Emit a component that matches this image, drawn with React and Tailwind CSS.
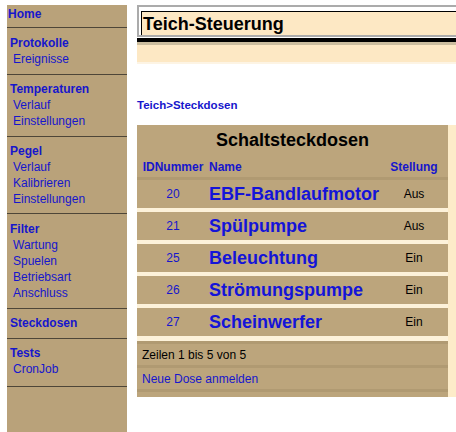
import React from "react";

const menu = [
  { title: "Protokolle", items: ["Ereignisse"], pad: "pt-[7px] pb-[7px]" },
  { title: "Temperaturen", items: ["Verlauf", "Einstellungen"], pad: "pt-[6px] pb-[7px]" },
  { title: "Pegel", items: ["Verlauf", "Kalibrieren", "Einstellungen"], pad: "pt-[6px] pb-[6px]" },
  { title: "Filter", items: ["Wartung", "Spuelen", "Betriebsart", "Anschluss"], pad: "pt-[7px] pb-[7px]" },
  { title: "Steckdosen", items: [], pad: "pt-[6px] pb-[7px]" },
  { title: "Tests", items: ["CronJob"], pad: "pt-[6px] pb-[9px]" },
];

const dosen = [
  { id: 20, name: "EBF-Bandlaufmotor", state: "Aus" },
  { id: 21, name: "Spülpumpe", state: "Aus" },
  { id: 25, name: "Beleuchtung", state: "Ein" },
  { id: 26, name: "Strömungspumpe", state: "Ein" },
  { id: 27, name: "Scheinwerfer", state: "Ein" },
];

const Sidebar = () => (
  <div className="w-[120px] shrink-0 bg-[#b9a27a] text-[12px] leading-[16px] text-[#1616cc]">
    <div className="pl-[1px] pt-[1px] pb-[5px] font-bold border-b border-[#4e4638]">Home</div>
    {menu.map((sec) => (
      <div key={sec.title} className={`${sec.pad} border-b border-[#4e4638]`}>
        <div className="pl-[3px] font-bold">{sec.title}</div>
        {sec.items.map((it, i) => (
          <div key={i} className="pl-[6px]">
            {it}
          </div>
        ))}
      </div>
    ))}
  </div>
);

const Header = () => (
  <div>
    <div className="border-t-2 border-l-2 border-[#ababab] pt-[4px] pl-[2px]">
      <div className="h-[24px] border-t border-l border-black bg-[#fde8c4] pl-[1px] pt-[1px] flex items-center text-[18px] font-bold text-black">
        Teich-Steuerung
      </div>
    </div>
    <div className="h-[2px] bg-[#ababab]" />
    <div className="h-[1px] bg-white" />
    <div className="h-[4px] bg-black" />
    <div className="h-[3px] bg-[#cbbd9f]" />
    <div className="h-[17px] bg-[#fde8c4]" />
    <div className="h-[2px] bg-[#fdf4e4]" />
  </div>
);

const Table = () => (
  <div className="flex bg-[#fdf2da]">
    <div className="w-[311px] shrink-0 flex flex-col">
      <div className="h-[31px] bg-[#bca57c] flex items-center justify-center text-[18px] font-bold text-black">
        Schaltsteckdosen
      </div>
      <div className="h-[21px] bg-[#bca57c] flex items-center text-[12px] font-bold text-[#1616cc]">
        <div className="w-[72px] text-center">IDNummer</div>
        <div className="w-[175px]">Name</div>
        <div className="w-[60px] text-center">Stellung</div>
      </div>
      <div className="h-[3px] bg-[#b09a72]" />
      <div className="flex flex-col gap-[4px]">
        {dosen.map((d) => (
          <div key={d.id} className="h-[28px] bg-[#bca57c] flex items-center">
            <div className="w-[72px] text-center text-[12px] text-[#1616cc]">{d.id}</div>
            <div className="w-[175px] text-[18px] font-bold text-[#1414d8] whitespace-nowrap">
              {d.name}
            </div>
            <div className="w-[60px] text-center text-[12px] text-black">{d.state}</div>
          </div>
        ))}
      </div>
      <div className="h-[5px]" />
      <div className="h-[3px] bg-[#b09a72]" />
      <div className="h-[21px] bg-[#bca57c] flex items-center pl-[5px] text-[12px] text-black">
        Zeilen 1 bis 5 von 5
      </div>
      <div className="h-[3px] bg-[#b09a72]" />
      <div className="h-[21px] bg-[#bca57c] flex items-center pl-[5px] text-[12px] text-[#1616cc]">
        Neue Dose anmelden
      </div>
      <div className="h-[3px] bg-[#b09a72]" />
      <div className="h-[5px] bg-[#bca57c]" />
    </div>
    <div className="flex-1 bg-[#fdecc9]" />
  </div>
);

export default function App() {
  return (
    <div
      className="w-[456px] h-[432px] overflow-hidden bg-white flex pl-[7px] pt-[5px]"
      style={{ fontFamily: '"Liberation Sans", Arial, sans-serif' }}
    >
      <Sidebar />
      <div className="ml-[10px] w-[340px] shrink-0">
        <Header />
        <div className="mt-[33px] text-[11.5px] leading-[16px] font-bold text-[#1616cc]">
          Teich&gt;Steckdosen
        </div>
        <div className="mt-[12px]">
          <Table />
        </div>
      </div>
    </div>
  );
}
